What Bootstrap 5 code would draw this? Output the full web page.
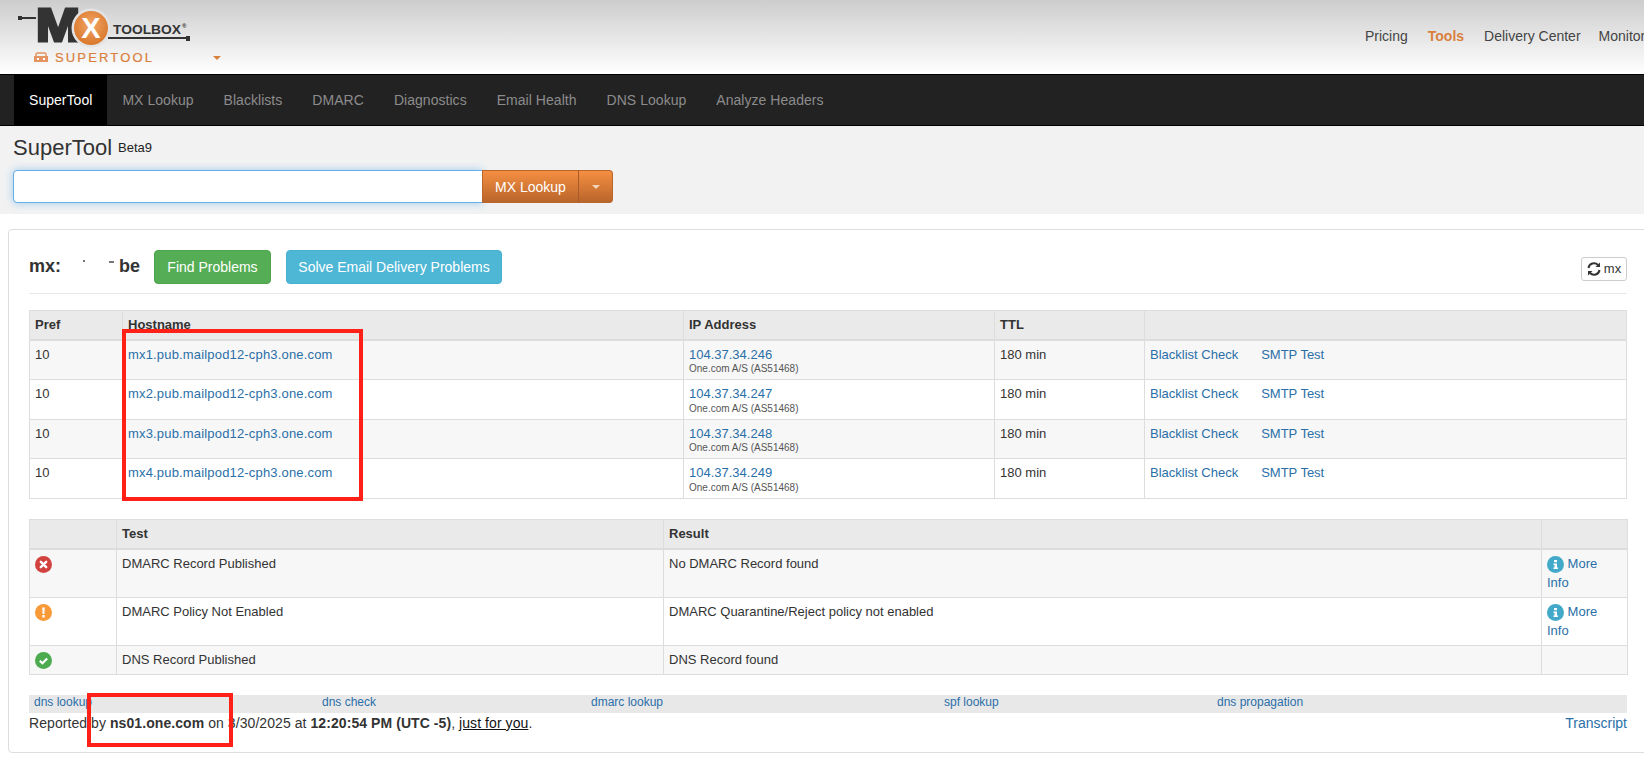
<!DOCTYPE html>
<html lang="en">
<head>
<meta charset="utf-8">
<title>SuperTool</title>
<link href="https://cdn.jsdelivr.net/npm/bootstrap@5.3.0/dist/css/bootstrap.min.css" rel="stylesheet">
<style>
html,body{height:760px;overflow:hidden}
body{position:relative;font-family:"Liberation Sans",Arial,sans-serif;font-size:13px;line-height:18.5px;color:#333;background:#fff}
a{color:#2a6fa8;text-decoration:none}
.hdr{height:74px;background:linear-gradient(#cdcdcd,#fff)}
.hdr svg{display:block;flex:none}
.toplinks{font-size:14px;white-space:nowrap;position:absolute;left:1355px;top:27px}
.toplinks a{color:#444;padding:0 10px}
.toplinks a.on{color:#d9803f;font-weight:700}
.toplinks a.lastone{margin-left:-2px}
.blackbar{height:52px;background:#222;border-top:1px solid #000;border-bottom:1px solid #000;padding-left:14px;letter-spacing:.04px}
.blackbar a{font-size:14px;color:#8c8c8c;padding:0 15px;height:50px;line-height:50px;display:block}
.blackbar a.on{background:#000;color:#fff}
.graybox{height:88px;background:#f2f2f2;padding:9px 13px 0}
.ttl{font-size:22px;line-height:26px;height:35px;color:#333}
.ttl sup{font-size:13px;top:-3px;margin-left:6px;color:#222;position:relative;vertical-align:baseline}
.srch{width:600px;height:33px;flex-wrap:nowrap}
.srch .form-control{width:470px;flex:none;height:33px;border:1px solid #66afe9;border-radius:4px 0 0 4px;box-shadow:0 0 8px rgba(102,175,233,.6);padding:0 12px}
.srch .btn{height:33px;width:97px;white-space:nowrap;background:linear-gradient(#f58f42,#b9652b);border:1px solid #b9652b;color:#fff;font-size:14px;line-height:20px;padding:0;border-radius:0}
.srch .btn.dd{width:35px;padding:0;border-left-color:#a9592a;border-radius:0 4px 4px 0;display:flex;align-items:center;justify-content:center}
.tri{display:block;width:0;height:0;border-left:4px solid transparent;border-right:4px solid transparent;border-top:4px solid #f3d3ba}
.sheet{width:1700px;margin:15px 0 0 8px;border:1px solid #ddd;border-radius:4px;padding:20px 20px 19px;display:block;height:524px}
.inner{width:1598px}
.headrow{height:34px}
.dom{font-size:18px;font-weight:700;color:#333;width:125px;line-height:33px;white-space:nowrap}
.gapbit{display:inline-block;width:29px;height:0;position:relative}
.markdot{position:absolute;background:#777;height:2px}
.md1{left:22px;width:2px;top:-12px}
.md2{left:19px;width:5px;top:-11px}
.btn-find{background:#55ae55;border:1px solid #4ea54e;color:#fff;font-size:14px;padding:0;width:117px;height:34px;line-height:32px;border-radius:4px}
.btn-solve{background:#4fb7d6;border:1px solid #46b0cf;color:#fff;font-size:14px;padding:0;width:216px;height:34px;line-height:32px;border-radius:4px;margin-left:15px}
.btn-ref{margin-left:auto;margin-top:7px;width:46px;height:24px;padding:0;border:1px solid #ccc;border-radius:3px;font-size:13px;line-height:22px;color:#333;background:#fff;display:flex;align-items:center;justify-content:center;gap:3px}
.rule{margin:9px 0 16px;border:0;border-top:1px solid #e8e8e8;opacity:1}
.tbx{width:1598px;table-layout:fixed;margin:0;border-collapse:collapse;--bs-table-striped-bg:#f7f7f7;--bs-table-bg:#fff;--bs-table-border-color:#ddd;--bs-table-color:#333;--bs-table-striped-color:#333}
.tbx th,.tbx td{padding:5px;line-height:18.5px;font-size:13px;border:1px solid #ddd;vertical-align:top}
.tbx thead th{background:#eaeaea;--bs-table-bg:#eaeaea;height:29px;padding:5px 5px 3px;border-bottom:2px solid #ddd;font-weight:700}
.tbx tbody tr:first-child td{border-top:0}
.tbx>:not(caption)>*>*{border-width:1px}
.tbx thead th{border-width:1px 1px 2px 1px}
.tbx .subt{display:block;font-size:10px;line-height:10px;color:#555}
.hostlink{letter-spacing:.17px}
.w-a{width:93px}.w-b{width:561px}.w-c{width:311px}.w-d{width:150px}
.w-e{width:87px}.w-f{width:547px}.w-g{width:878px}.w-h{width:86px}
.gaptab{margin-top:20px}
.gaptab thead th{height:30px}
.gaptab tbody tr:last-child td{padding-bottom:4px}
.act a+a{margin-left:23px}
.ico{display:block;width:17px;height:17px;margin-top:1px}
.ico2{display:inline-block;vertical-align:top;width:17px;height:17px;margin-top:1px}
.linkbar{margin-top:20px;height:18px;background:#e8e8e8;font-size:12px;line-height:15px}
.linkbar a{display:block;padding-left:5px}
.l1{width:288px}.l2{width:269px}.l3{width:353px}.l4{width:273px}
.repline{font-size:14px;line-height:20px;color:#333}
.repline .rt{letter-spacing:.07px}
.repline u{color:#111}
.redbox{position:absolute;border:4px solid #ff2018;background:transparent}
.rb1{left:122px;top:329px;width:241px;height:172px}
.rb2{left:87px;top:693px;width:146px;height:54px}
</style>
</head>
<body>
<header class="hdr d-flex">
  <svg width="240" height="74" viewBox="0 0 240 74" role="img" aria-label="MX Toolbox SuperTool">
    <rect x="18" y="16" width="4" height="4" fill="#333"/>
    <rect x="22" y="17" width="14" height="2" fill="#333"/>
    <text x="36" y="40.500" font-family="Liberation Sans" font-weight="700" font-size="46" fill="#333" stroke="#333" stroke-width="3" textLength="44" lengthAdjust="spacingAndGlyphs">M</text>
    <rect x="108" y="37" width="79" height="2" fill="#333"/>
    <rect x="186" y="36" width="4" height="5" fill="#333"/>
    <circle cx="91" cy="28" r="19.500" fill="#e3e3e3"/>
    <defs><radialGradient id="og" cx=".5" cy=".4" r=".6"><stop offset="0" stop-color="#f2a565"/><stop offset="1" stop-color="#d9782c"/></radialGradient></defs>
    <circle cx="91" cy="28" r="17" fill="url(#og)"/>
    <text x="91" y="38" text-anchor="middle" font-family="Liberation Sans" font-weight="700" font-size="29" fill="#fff">X</text>
    <text x="113" y="34" font-family="Liberation Sans" font-weight="700" font-size="13.500" fill="#333" textLength="68" lengthAdjust="spacingAndGlyphs">TOOLBOX</text>
    <text x="182" y="28" font-family="Liberation Sans" font-weight="700" font-size="6" fill="#333">®</text>
    <path d="M34 56h14v6h-14z" fill="#e39460"/>
    <path d="M36 56v-1.500q0-1.500 1.500-1.500h7q1.500 0 1.500 1.500v1.500" fill="none" stroke="#e39460" stroke-width="1.500"/>
    <rect x="37" y="58" width="2" height="2" fill="#fff"/><rect x="43" y="58" width="2" height="2" fill="#fff"/>
    <text x="55" y="62" font-family="Liberation Sans" font-size="13" fill="#d9803f" stroke="#d9803f" stroke-width=".2" textLength="97">SUPERTOOL</text>
    <path d="M213 56h8l-4 4z" fill="#d9803f"/>
  </svg>
  <nav class="toplinks"><a href="#">Pricing</a><a href="#" class="on">Tools</a><a href="#">Delivery Center</a><a href="#" class="lastone">Monitoring</a></nav>
</header>
<nav class="blackbar d-flex">
  <a href="#" class="on">SuperTool</a><a href="#">MX Lookup</a><a href="#">Blacklists</a><a href="#">DMARC</a><a href="#">Diagnostics</a><a href="#">Email Health</a><a href="#">DNS Lookup</a><a href="#">Analyze Headers</a>
</nav>
<section class="graybox">
  <div class="ttl">SuperTool<sup>Beta9</sup></div>
  <div class="input-group srch">
    <input class="form-control" type="text" aria-label="Search">
    <button class="btn" type="button">MX Lookup</button>
    <button class="btn dd" type="button" aria-label="More"><span class="tri"></span></button>
  </div>
</section>
<main class="card sheet">
 <div class="inner">
  <div class="headrow d-flex">
    <div class="dom">mx:<span class="gapbit"><span class="markdot md1"></span></span><span class="gapbit"><span class="markdot md2"></span></span>be</div>
    <button class="btn-find btn" type="button">Find Problems</button>
    <button class="btn-solve btn" type="button">Solve Email Delivery Problems</button>
    <button class="btn-ref btn" type="button">
      <svg width="14" height="14" viewBox="0 0 14 14" fill="none" stroke="#333" stroke-width="2"><path d="M1.500 6A5.500 5.500 0 0 1 11 3"/><path d="M12.500 8A5.500 5.500 0 0 1 3 11"/><path d="M13 .5V5H8.500z" fill="#333" stroke="none"/><path d="M1 13.500V9H5.500z" fill="#333" stroke="none"/></svg>mx</button>
  </div>
  <hr class="rule">
  <table class="table table-striped tbx">
    <colgroup><col class="w-a"><col class="w-b"><col class="w-c"><col class="w-d"><col></colgroup>
    <thead><tr><th>Pref</th><th>Hostname</th><th>IP Address</th><th>TTL</th><th></th></tr></thead>
    <tbody>
      <tr><td>10</td><td><a href="#" class="hostlink">mx1.pub.mailpod12-cph3.one.com</a></td><td><a href="#">104.37.34.246</a><span class="subt">One.com A/S (AS51468)</span></td><td>180 min</td><td class="act"><a href="#">Blacklist Check</a><a href="#">SMTP Test</a></td></tr>
      <tr><td>10</td><td><a href="#" class="hostlink">mx2.pub.mailpod12-cph3.one.com</a></td><td><a href="#">104.37.34.247</a><span class="subt">One.com A/S (AS51468)</span></td><td>180 min</td><td class="act"><a href="#">Blacklist Check</a><a href="#">SMTP Test</a></td></tr>
      <tr><td>10</td><td><a href="#" class="hostlink">mx3.pub.mailpod12-cph3.one.com</a></td><td><a href="#">104.37.34.248</a><span class="subt">One.com A/S (AS51468)</span></td><td>180 min</td><td class="act"><a href="#">Blacklist Check</a><a href="#">SMTP Test</a></td></tr>
      <tr><td>10</td><td><a href="#" class="hostlink">mx4.pub.mailpod12-cph3.one.com</a></td><td><a href="#">104.37.34.249</a><span class="subt">One.com A/S (AS51468)</span></td><td>180 min</td><td class="act"><a href="#">Blacklist Check</a><a href="#">SMTP Test</a></td></tr>
    </tbody>
  </table>
  <table class="table table-striped tbx gaptab">
    <colgroup><col class="w-e"><col class="w-f"><col class="w-g"><col class="w-h"></colgroup>
    <thead><tr><th></th><th>Test</th><th>Result</th><th></th></tr></thead>
    <tbody>
      <tr><td><svg class="ico" viewBox="0 0 17 17"><circle cx="8.500" cy="8.500" r="8.500" fill="#d2433f"/><path d="M5.800 5.800l5.400 5.400M11.200 5.800l-5.400 5.400" stroke="#fff" stroke-width="2.400" stroke-linecap="round"/></svg></td><td>DMARC Record Published</td><td>No DMARC Record found</td><td><a href="#"><svg class="ico2" viewBox="0 0 17 17"><circle cx="8.500" cy="8.500" r="8.500" fill="#43a9c9"/><path d="M7 4h3v2.200H7zM6.500 7.500h3.500v4h1v1.500H6.500v-1.500h1v-2.500h-1z" fill="#fff"/></svg> More Info</a></td></tr>
      <tr><td><svg class="ico" viewBox="0 0 17 17"><circle cx="8.500" cy="8.500" r="8.500" fill="#f89a38"/><path d="M7.200 3.500h2.600l-.4 6.500H7.600zM7.300 11h2.400v2.400H7.300z" fill="#fff"/></svg></td><td>DMARC Policy Not Enabled</td><td>DMARC Quarantine/Reject policy not enabled</td><td><a href="#"><svg class="ico2" viewBox="0 0 17 17"><circle cx="8.500" cy="8.500" r="8.500" fill="#43a9c9"/><path d="M7 4h3v2.200H7zM6.500 7.500h3.500v4h1v1.500H6.500v-1.500h1v-2.500h-1z" fill="#fff"/></svg> More Info</a></td></tr>
      <tr><td><svg class="ico" viewBox="0 0 17 17"><circle cx="8.500" cy="8.500" r="8.500" fill="#4dab4f"/><path d="M4.800 8.800l2.600 2.500 4.800-4.800" fill="none" stroke="#fff" stroke-width="2.200"/></svg></td><td>DNS Record Published</td><td>DNS Record found</td><td></td></tr>
    </tbody>
  </table>
  <div class="linkbar d-flex">
    <a href="#" class="l1">dns lookup</a><a href="#" class="l2">dns check</a><a href="#" class="l3">dmarc lookup</a><a href="#" class="l4">spf lookup</a><a href="#">dns propagation</a>
  </div>
  <div class="repline d-flex justify-content-between">
    <span class="rt">Reported by <b>ns01.one.com</b> on 3/30/2025 at <b>12:20:54 PM (UTC -5)</b>, <u>just for you</u>.</span>
    <a href="#">Transcript</a>
  </div>
 </div>
</main>
<div class="redbox rb1"></div>
<div class="redbox rb2"></div>
<script src="https://cdn.jsdelivr.net/npm/bootstrap@5.3.0/dist/js/bootstrap.bundle.min.js"></script>
</body>
</html>
